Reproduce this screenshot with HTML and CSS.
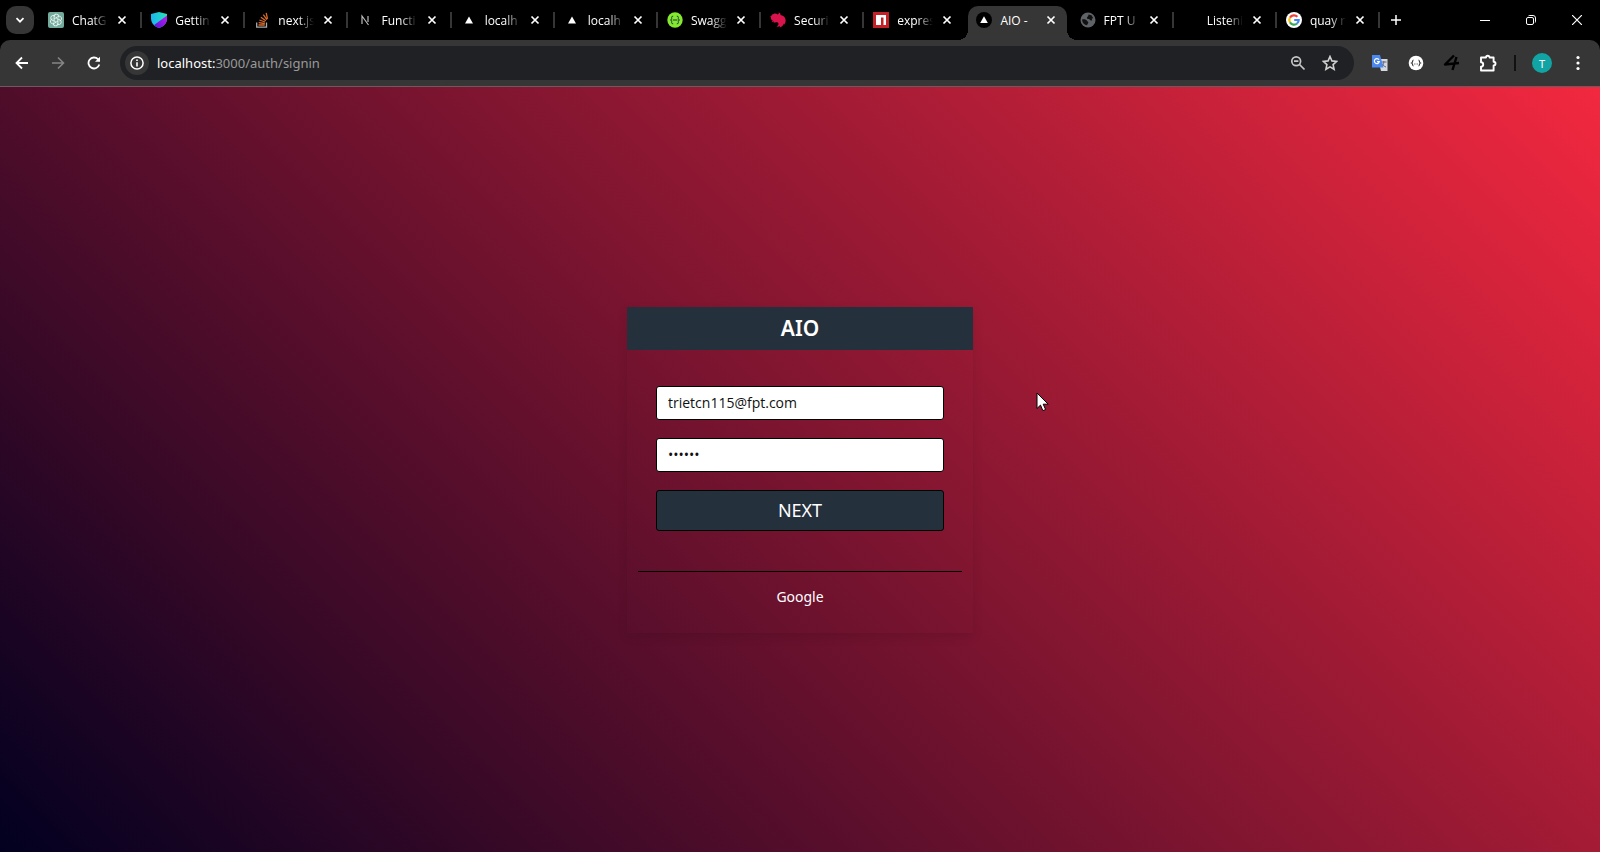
FILE: index.html
```html
<!DOCTYPE html>
<html lang="en">
<head>
<meta charset="utf-8">
<title>AIO - Sign in</title>
<link rel="stylesheet" href="styles.css">
</head>
<body>
<svg class="defs" aria-hidden="true">
  <symbol id="x" viewBox="0 0 10 10"><path d="M1.500 1.500l7 7M8.500 1.500l-7 7" stroke="currentColor" stroke-width="1.700"/></symbol>
  <symbol id="tri" viewBox="0 0 16 16"><path d="M8 4.500l4 7H4z" fill="#fff"/></symbol>
</svg>
<header class="browser">
  <div class="strip">
    <button class="search" aria-label="Search tabs"><svg width="10" height="10" viewBox="0 0 10 10"><path d="M1.500 3.200L5 6.700l3.500-3.500" fill="none" stroke="#fff" stroke-width="1.700"/></svg></button>
    <nav class="tabs" aria-label="Tabs">
      <div class="tab"><svg class="fav" viewBox="0 0 16 16"><rect width="16" height="16" rx="2" fill="#74aa9c"/><g fill="none" stroke="#e9f5f1" stroke-width=".9"><path id="p" d="M8 5.800l2.200-1.300c1.800-1 3.900.8 3.300 2.700-.3 1-1 1.500-1.900 1.900"/><use href="#p" transform="rotate(60 8 8)"/><use href="#p" transform="rotate(120 8 8)"/><use href="#p" transform="rotate(180 8 8)"/><use href="#p" transform="rotate(240 8 8)"/><use href="#p" transform="rotate(300 8 8)"/><path d="M8 5.800l1.900 1.100v2.200L8 10.200 6.100 9.100V6.900z"/></g></svg><a class="name" href="#">ChatG</a><button class="close" aria-label="Close tab"><svg><use href="#x"/></svg></button></div>
      <div class="tab"><svg class="fav" viewBox="0 0 16 16"><defs><linearGradient id="sg" x1="0" y1="0" x2="1" y2="0"><stop offset="0" stop-color="#1bb5f5"/><stop offset="1" stop-color="#24e6b0"/></linearGradient><linearGradient id="sp" x1="0" y1="1" x2="1" y2="0"><stop offset="0" stop-color="#5a12d8"/><stop offset="1" stop-color="#c01cf2"/></linearGradient></defs><path d="M8 0l8 2v4c0 5-3 8.500-8 10C3 14.500 0 11 0 6V2z" fill="url(#sg)"/><path d="M16 3.500V6c0 5-3 8.500-8 10-2-.6-3.600-1.700-4.900-3.100z" fill="url(#sp)"/></svg><a class="name" href="#">Gettin</a><button class="close" aria-label="Close tab"><svg><use href="#x"/></svg></button></div>
      <div class="tab"><svg class="fav" viewBox="0 0 16 16"><path d="M2.700 10.500v4.700h9.800v-4.700" fill="none" stroke="#aaa" stroke-width="1.300"/><g stroke="#d96a2b" stroke-width="1.300"><path d="M4.500 13h6.200M4.700 10.600l6.100.9M5.400 8l5.700 2M6.900 5.200l4.900 3.600M9.300 2.700l3.600 4.900M12.200.9l1.300 6"/></g></svg><a class="name" href="#">next.js</a><button class="close" aria-label="Close tab"><svg><use href="#x"/></svg></button></div>
      <div class="tab"><svg class="fav" viewBox="0 0 16 16"><path d="M5 12V4l6.500 9M11 4v6" fill="none" stroke="#bbb" stroke-width="1.200"/></svg><a class="name" href="#">Functi</a><button class="close" aria-label="Close tab"><svg><use href="#x"/></svg></button></div>
      <div class="tab"><svg class="fav"><use href="#tri"/></svg><a class="name" href="#">localh</a><button class="close" aria-label="Close tab"><svg><use href="#x"/></svg></button></div>
      <div class="tab"><svg class="fav"><use href="#tri"/></svg><a class="name" href="#">localh</a><button class="close" aria-label="Close tab"><svg><use href="#x"/></svg></button></div>
      <div class="tab"><svg class="fav" viewBox="0 0 16 16"><circle cx="8" cy="8" r="7.700" fill="#85ea2d"/><path d="M6.200 4.200c-2 0-1.500 1-1.500 2.300 0 .9-.3 1.300-1.200 1.500.9.200 1.200.6 1.200 1.500 0 1.300-.5 2.300 1.500 2.300M9.800 4.200c2 0 1.500 1 1.500 2.300 0 .9.300 1.300 1.200 1.500-.9.200-1.200.6-1.200 1.500 0 1.300.5 2.300-1.500 2.300M5.800 8h4.600" fill="none" stroke="#173647"/></svg><a class="name" href="#">Swagg</a><button class="close" aria-label="Close tab"><svg><use href="#x"/></svg></button></div>
      <div class="tab"><svg class="fav" viewBox="0 0 16 16"><path d="M8.600.5c1.700.2 2.200 1.400 1.800 2.600 2.600.3 4.300 1.700 4.900 3.700.8 2.500.1 4.500-1.200 6l-.2-1.400c-.7 2-2.200 3.500-4.400 4.100l.7-1.500c-1.200.7-2.500.9-3.700.6l1.300-1.200c1.200-1.300.7-2.600-.6-3.100-1.200-.3-2.400.2-3.700.4l.6-1.200-2.600.4L2.800 8.600C1.400 8.200.8 7 1 5.700L.2 4.200l1.200-.3C1.600 2.700 2.600 2 3.700 2c1.300-.8 2.900-.5 3.900.5 1-.2 1.400-1 1-2z" fill="#d9134b"/></svg><a class="name" href="#">Securi</a><button class="close" aria-label="Close tab"><svg><use href="#x"/></svg></button></div>
      <div class="tab"><svg class="fav" viewBox="0 0 16 16"><path fill="#c12127" d="M0 0h16v16H0z"/><path fill="#fff" d="M3 3h10v10h-2.500V5.500H8V13H3z"/></svg><a class="name" href="#">expres</a><button class="close" aria-label="Close tab"><svg><use href="#x"/></svg></button></div>
      <div class="tab active"><svg class="fav" viewBox="0 0 16 16"><circle cx="8" cy="8" r="8"/><path d="M8 4.300l3.800 6.700H4.200z" fill="#fff"/></svg><a class="name" href="#" aria-current="page">AIO -</a><button class="close" aria-label="Close tab"><svg><use href="#x"/></svg></button></div>
      <div class="tab"><svg class="fav" viewBox="0 0 16 16"><circle cx="8" cy="8" r="7.500" fill="#5f6368"/><path d="M2.200 7.200c2-.2 4 .3 4.600 1.400.3 1 1.400.8 1.500 1.800.1 1.200-1 1.300-1.300 2.900-3-.6-5-3-4.800-6.100zM8.500 2.500l3 .8 1.800 2.900-1.500.2.300 1.800c-1.600.6-2.600-.2-2.700-1.200-1.500.2-2.700-.5-2.400-1.600.2-.9 1.400-.6 1.500-2.900z" fill="#111"/></svg><a class="name" href="#">FPT U</a><button class="close" aria-label="Close tab"><svg><use href="#x"/></svg></button></div>
      <div class="tab"><span class="fav"></span><a class="name" href="#">Listeni</a><button class="close" aria-label="Close tab"><svg><use href="#x"/></svg></button></div>
      <div class="tab"><svg class="fav" viewBox="0 0 16 16"><circle cx="8" cy="8" r="8" fill="#fff"/><g fill="none" stroke-width="2.200"><path d="M4 5.600A4.700 4.700 0 0 1 11.400 4.700" stroke="#ea4335"/><path d="M4 5.600a4.700 4.700 0 0 0 0 4.800" stroke="#fbbc05"/><path d="M4 10.400a4.700 4.700 0 0 0 7.100 1.100" stroke="#34a853"/><path d="M11.100 11.500A4.700 4.700 0 0 0 12.700 8H8.200" stroke="#4285f4"/></g></svg><a class="name" href="#">quay r</a><button class="close" aria-label="Close tab"><svg><use href="#x"/></svg></button></div>
    </nav>
    <button class="icon new" aria-label="New tab"><svg width="12" height="12" viewBox="0 0 12 12"><path d="M6 1v10M1 6h10" stroke="#fff" stroke-width="1.500"/></svg></button>
    <div class="window">
      <button class="icon" aria-label="Minimize"><svg width="10" height="10" viewBox="0 0 10 10"><path d="M0 5.500h10" stroke="#fff"/></svg></button>
      <button class="icon" aria-label="Restore"><svg width="10" height="10" viewBox="0 0 10 10" fill="none" stroke="#fff"><rect x=".5" y="2.500" width="7" height="7" rx="1.500"/><path d="M2.500 .8C3 .5 3.300.5 4 .5h3a2.500 2.500 0 0 1 2.500 2.500v3c0 .7 0 1-.3 1.500"/></svg></button>
      <button class="icon" aria-label="Close"><svg width="10" height="10" viewBox="0 0 10 10"><path d="M0 0l10 10M10 0L0 10" stroke="#fff" stroke-width="1.200"/></svg></button>
    </div>
  </div>
  <div class="toolbar">
    <button class="icon" aria-label="Back"><svg width="14" height="14" viewBox="0 0 14 14"><path d="M13 7H2M7 1.500L1.500 7 7 12.500" fill="none" stroke="#fff" stroke-width="1.800"/></svg></button>
    <button class="icon" aria-label="Forward"><svg width="14" height="14" viewBox="0 0 14 14"><path d="M1 7h11M7 1.500L12.500 7 7 12.500" fill="none" stroke="#858585" stroke-width="1.600"/></svg></button>
    <button class="icon" aria-label="Reload"><svg width="14" height="14" viewBox="0 0 14 14"><path d="M12.300 8.500A5.500 5.500 0 1 1 11 3.200l1.500 1.700" fill="none" stroke="#fff" stroke-width="1.800"/><path d="M13 .8v5H8z" fill="#fff"/></svg></button>
    <div class="omnibox">
      <button class="info" aria-label="Site information"><svg width="14" height="14" viewBox="0 0 14 14"><circle cx="7" cy="7" r="6.100" fill="none" stroke="#fff" stroke-width="1.500"/><path d="M7 6.200v4.300M7 3.500v1.600" stroke="#fff" stroke-width="1.600"/></svg></button>
      <a class="url" href="#"><span>localhost:</span>3000/auth/signin</a>
      <button class="icon" aria-label="Zoom"><svg width="16" height="16" viewBox="0 0 16 16" fill="none" stroke="#c7c7c7" stroke-width="1.700"><circle cx="6.200" cy="6.200" r="4.400"/><path d="M9.500 9.500l5 5M4 6.200h4.400"/></svg></button>
      <button class="icon" aria-label="Bookmark"><svg width="16" height="16" viewBox="0 0 16 16"><path d="M8 1.500l1.900 4.400 4.800.5-3.600 3.200 1 4.700L8 11.900l-4.100 2.400 1-4.700L1.300 6.400l4.800-.5z" fill="none" stroke="#d0d0d0" stroke-width="1.600"/></svg></button>
    </div>
    <div class="extensions">
      <button class="icon" aria-label="Translate"><svg width="16" height="16" viewBox="0 0 16 16"><path d="M6 4h9.500v12H9z" fill="#d5d9df"/><path d="M9 7h5.500M11.800 6v1c0 2.500-1.500 4-3 4.500M10 8.500c1 2 2.500 3 4 3.500" stroke="#667" fill="none"/><path d="M0 0h8l3.500 12.500H0z" fill="#4c88ee"/><path d="M7 4.800A2.500 2.500 0 1 0 7.300 6.600H5" stroke="#fff" stroke-width="1.200" fill="none"/></svg></button>
      <button class="icon" aria-label="JSON viewer"><svg width="16" height="16" viewBox="0 0 16 16"><circle cx="8" cy="8" r="7.300" fill="#fff"/><path d="M5.500 5c-1.300 0-.5 2.500-1.800 3 1.300.5.500 3 1.800 3M10.500 5c1.300 0 .5 2.500 1.800 3-1.300.5-.5 3-1.800 3" fill="none" stroke="#333" stroke-width="1.100"/><path d="M6 9h4" stroke="#777" stroke-dasharray="1 .5"/></svg></button>
      <button class="icon" aria-label="Extension"><svg width="18" height="18" viewBox="0 0 18 18"><path d="M11 1.500L2 10.500l14-1.500M13.500 3L9.500 16" fill="none" stroke="#000" stroke-width="2.400" stroke-linejoin="round"/></svg></button>
      <button class="icon" aria-label="Extensions"><svg width="18" height="18" viewBox="0 0 18 18"><path d="M2 3.500h5a1.800 1.800 0 0 1 3.600 0h4v4.200a1.900 1.900 0 0 1 0 3.800v5H2v-3.900a2.200 2.200 0 0 0 0-4.400z" fill="none" stroke="#fff" stroke-width="1.900" stroke-linejoin="round"/></svg></button>
    </div>
    <span class="divider"></span>
    <button class="avatar" aria-label="Profile">T</button>
    <button class="icon menu" aria-label="Menu"><svg width="4" height="16" viewBox="0 0 4 16" fill="#fff"><circle cx="2" cy="2.500" r="1.600"/><circle cx="2" cy="8" r="1.600"/><circle cx="2" cy="13.500" r="1.600"/></svg></button>
  </div>
</header>
<main class="page">
  <section class="card">
    <h1>AIO</h1>
    <form>
      <input type="email" aria-label="Email" value="trietcn115@fpt.com">
      <input type="password" aria-label="Password" value="123456">
      <button type="button">NEXT</button>
    </form>
    <div class="other"><a href="#">Google</a></div>
  </section>
  <svg class="cursor" width="14" height="20" viewBox="0 0 14 20"><path d="M1 1v15.500l3.500-3.400 2.400 5.600 2.700-1.200-2.400-5.300h5z" fill="#fff" stroke="#000"/></svg>
</main>
</body>
</html>
```
FILE: styles.css
```css
* { box-sizing: border-box; }
body {
  margin: 0;
  min-height: 100vh;
  display: flex;
  flex-direction: column;
  background: #000;
  color: #fff;
  font-family: "Noto Sans", "Open Sans", sans-serif;
}
button { padding: 0; border: 0; background: none; color: inherit; font: inherit; }
a { color: inherit; text-decoration: none; }
svg { flex: none; display: block; }
.defs { position: absolute; width: 0; height: 0; }

.strip { display: flex; align-items: center; height: 40px; padding-left: 6px; }
.search {
  display: flex; align-items: center; justify-content: center;
  width: 28px; height: 28px; border-radius: 10px; background: #363636;
}
.tabs { display: flex; flex: 0 1 1341px; min-width: 0; margin-left: 5px; align-self: stretch; }
.tab {
  position: relative;
  display: flex; align-items: center; flex: 1 1 0; min-width: 0;
  padding: 0 15px 0 9px;
  font-family: "Open Sans", "Noto Sans", sans-serif;
  font-size: 12px;
}
.tab::after {
  content: ""; position: absolute; right: 0; top: 12px;
  width: 2px; height: 16px; background: #363636;
}
.tab:nth-child(9)::after { display: none; }
.fav { width: 16px; height: 16px; flex: none; }
.name {
  flex: 1; min-width: 0; margin: 0 8px;
  white-space: nowrap;
  mask-image: linear-gradient(to right, #000 20px, transparent 36px);
}
.close, .close svg { width: 10px; height: 10px; }
.active { z-index: 1; }
.active .name { mask-image: none; }
.active::before {
  content: ""; position: absolute; z-index: -1; inset: 6px 4px 0 1px;
  border-radius: 10px 10px 0 0;
  background: #363636;
}
.active::after {
  z-index: -1; inset: 30px -6px 0 -9px;
  width: auto; height: 10px;
  background:
    radial-gradient(circle at 0 0, transparent 10px, #363636 10px) left / 10px 10px no-repeat,
    radial-gradient(circle at 100% 0, transparent 10px, #363636 10px) right / 10px 10px no-repeat;
}
.icon { display: flex; align-items: center; justify-content: center; width: 36px; height: 28px; }
.new { width: 31px; }
.window { display: flex; margin-left: auto; }
.window .icon { width: 46px; }

.toolbar {
  display: flex; align-items: center;
  height: 47px; padding: 0 4px;
  background: #363636;
  border-bottom: 1px solid #6b5a5e;
  border-radius: 10px 10px 0 0;
}
.omnibox {
  display: flex; align-items: center; flex: 1;
  height: 34px; margin-left: 8px; padding: 0 8px 0 5px;
  border-radius: 17px; background: #202124;
}
.omnibox .icon { width: 32px; }
.info {
  display: flex; align-items: center; justify-content: center;
  width: 24px; height: 24px; border-radius: 12px; background: #363636;
}
.url { flex: 1; margin-left: 8px; font-size: 13px; color: #9a9a9a; }
.url span { color: #fff; }
.extensions { display: flex; margin-left: 8px; }
.divider { width: 2px; height: 16px; margin: 0 16px 0 8px; background: #111; }
.avatar { width: 20px; height: 20px; border-radius: 50%; background: #12a4a4; font-size: 11px; }
.menu { margin-left: 8px; }

.page {
  position: relative; flex: 1;
  display: flex; align-items: center; justify-content: center;
  background: linear-gradient(45deg, #020020, #f2283f);
}
.card { width: 346px; box-shadow: 0 4px 10px rgb(0 0 0 / 10%); }
.card h1 {
  margin: 0; background: #25303d;
  font-size: 21px; line-height: 43px; font-weight: 600; text-align: center;
}
.card form { display: grid; gap: 18px; padding: 36px 29px 40px; }
.card input, .card form button { width: 100%; border: 1px solid #000; border-radius: 3px; }
.card input {
  height: 34px; padding: 0 11px;
  background: #fff; color: #111;
  font: 14px "Open Sans", "Noto Sans", sans-serif;
}
.card form button { height: 41px; background: #25303d; font-size: 18px; }
.other {
  margin: 0 11px; padding: 15px 0 26px;
  border-top: 1px solid #000;
  font-size: 14px; line-height: 20px; text-align: center;
}
.cursor { position: absolute; left: calc(50% + 236px); top: 305px; }
```
